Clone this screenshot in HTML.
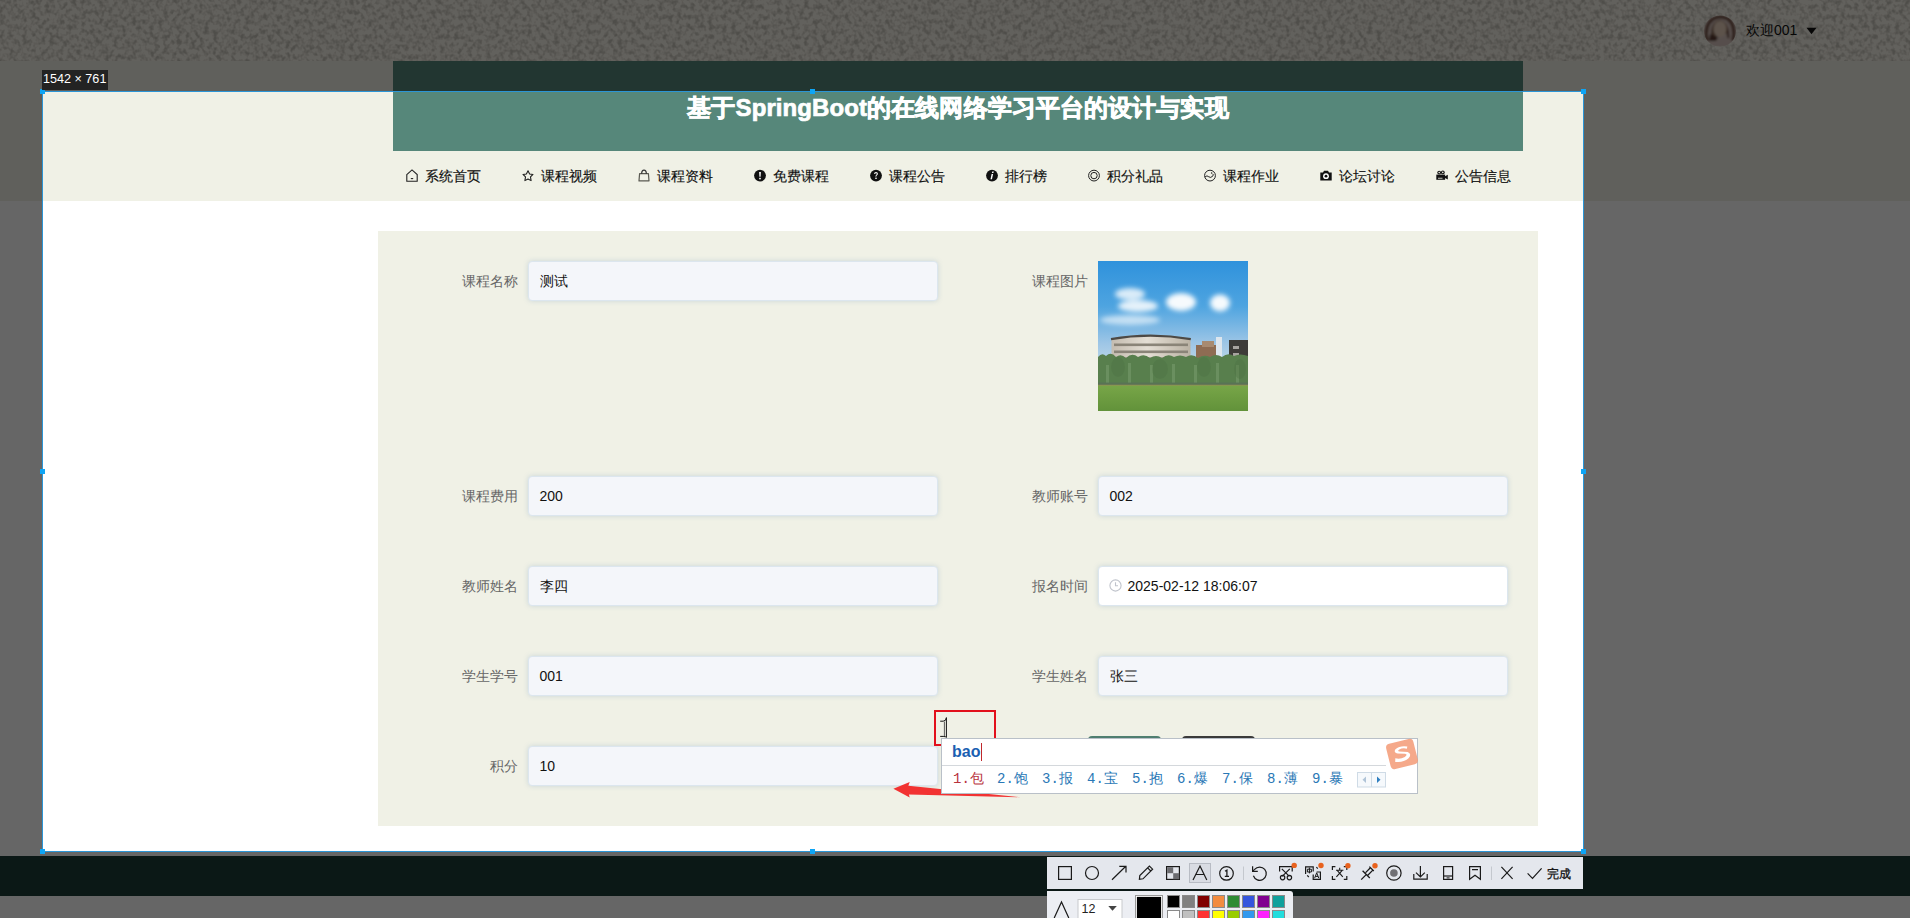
<!DOCTYPE html>
<html><head><meta charset="utf-8">
<style>
*{margin:0;padding:0;box-sizing:border-box}
html,body{width:1910px;height:918px;overflow:hidden;background:#fff}
body{position:relative;font-family:"Liberation Sans",sans-serif;color:#333}
.a{position:absolute}
#topbar{left:0;top:0;width:1910px;height:61px;background:#ede7da}
#hdr{left:0;top:61px;width:1910px;height:140px;background:#f0f1e6}
#green{left:393px;top:61px;width:1130px;height:90px;background:#56877a}
#title{left:393px;top:92px;width:1130px;text-align:center;color:#fff;font-size:24px;font-weight:bold;line-height:32px;white-space:nowrap;letter-spacing:0.1px;-webkit-text-stroke:0.7px #fff}
.nav{top:168px;font-size:14px;line-height:16px;color:#111;white-space:nowrap;-webkit-text-stroke:0.15px #111}
.nav svg{position:absolute;left:0;top:1px}
.nav span{position:absolute;left:19px;top:0}
#page{left:0;top:201px;width:1910px;height:655px;background:#fff}
#form{left:378px;top:231px;width:1160px;height:595px;background:#f0f1e6}
.lbl{font-size:14px;color:#666;line-height:16px;white-space:nowrap;text-align:right;width:100px}
.inp{width:410px;height:40px;background:#f4f6fa;border:1px solid #dce6ee;border-radius:4px;box-shadow:0 0 5px rgba(90,140,180,.25);font-size:14px;color:#111;line-height:38px;padding-left:10.5px;white-space:nowrap}
#footer{left:0;top:856px;width:1910px;height:40px;background:#1c3c37}
.ov{background:rgba(0,0,0,.6)}
.hd{width:5px;height:5px;background:#0ea5f5}
.ime{top:771px;font-size:14px;line-height:16px;color:#2a78b6;white-space:nowrap;font-family:"Liberation Mono",monospace;letter-spacing:0}
#sizelbl{left:42px;top:70px;width:66px;height:20px;background:#232323;color:#fff;font-size:12.6px;line-height:19px;text-align:left;padding-left:1px;white-space:nowrap}
</style></head><body>
<svg class="a" style="left:0;top:0" width="1910" height="61"><defs><filter id="nz" x="0" y="0" width="100%" height="100%"><feTurbulence type="fractalNoise" baseFrequency="0.22 0.2" numOctaves="2" seed="7"/><feColorMatrix type="matrix" values="0 0 0 0 0.1  0 0 0 0 0.1  0 0 0 0 0.08  3 0 0 0 -1.25"/></filter></defs>
<rect width="1910" height="61" fill="#f6f2e8"/><rect width="1910" height="61" filter="url(#nz)" opacity="0.3"/></svg>

<svg class="a" style="left:1703px;top:15px" width="34" height="32" viewBox="0 0 34 32">
<defs><clipPath id="avc"><ellipse cx="17" cy="16" rx="16" ry="15.5"/></clipPath>
<filter id="avb" x="-10%" y="-10%" width="120%" height="120%"><feGaussianBlur stdDeviation="0.9"/></filter></defs>
<g clip-path="url(#avc)"><g filter="url(#avb)">
<rect width="34" height="32" fill="#d8c4be"/>
<path d="M4 26 Q1 10 10 4 Q17 0 25 4 Q33 10 30 26" fill="none" stroke="#765244" stroke-width="3.5"/>
<path d="M8 22 Q7 8 16 5 Q25 6 26 18" fill="#8a6a58"/>
<ellipse cx="17" cy="14" rx="6.5" ry="8" fill="#e8d0bc"/>
<path d="M7 19 L15 22 L13 26 L6 26 Z" fill="#5a3a30"/>
<path d="M24 12 Q27 18 26 24 L24 22 Z" fill="#6a4438"/>
</g></g>
</svg>
<div class="a" style="left:1746px;top:22px;font-size:14px;line-height:16px;color:#111;white-space:nowrap">欢迎001</div>
<svg class="a" style="left:1806px;top:27px" width="11" height="8" viewBox="0 0 11 8"><path d="M0.5 0.8 H10.5 L5.5 7.2 Z" fill="#111"/></svg>
<div class="a" id="hdr"></div>
<div class="a" id="green"></div>
<div class="a" id="title">基于SpringBoot的在线网络学习平台的设计与实现</div>

<div class="a nav" style="left:406px"><svg width="12" height="13" viewBox="0 0 12 13"><path d="M0.8 5.6 L6 0.9 L11.2 5.6 V12.2 H0.8 Z" fill="none" stroke="#222" stroke-width="1.1"/><path d="M4.8 9.6 H7.2" stroke="#222" stroke-width="1.1"/></svg><span>系统首页</span></div>
<div class="a nav" style="left:522px"><svg width="12" height="13" viewBox="0 0 12 13"><path d="M6 1.8 L7.6 4.9 L11 5.4 L8.5 7.9 L9.1 11.6 L6 10 L2.9 11.6 L3.5 7.9 L1 5.4 L4.4 4.9 Z" fill="none" stroke="#1a1a1a" stroke-width="1.05" stroke-linejoin="round"/></svg><span>课程视频</span></div>
<div class="a nav" style="left:638px"><svg width="12" height="13" viewBox="0 0 12 13"><path d="M1.6 4.6 H10.4 L11 11.9 H1 Z" fill="none" stroke="#5a5a52" stroke-width="1.2" stroke-linejoin="round"/><path d="M3.6 4.8 Q3.8 1.2 6 1.2 Q8.2 1.2 8.4 4.8" fill="none" stroke="#333" stroke-width="1.2"/></svg><span>课程资料</span></div>
<div class="a nav" style="left:754px"><svg width="12" height="13" viewBox="0 0 12 13"><circle cx="6" cy="6.6" r="5.9" fill="#111"/><path d="M5.1 3 H6.9 L6.6 7.8 H5.4 Z" fill="#fff"/><rect x="5.2" y="8.8" width="1.6" height="1.5" fill="#fff"/></svg><span>免费课程</span></div>
<div class="a nav" style="left:870px"><svg width="12" height="13" viewBox="0 0 12 13"><circle cx="6" cy="6.6" r="5.9" fill="#111"/><path d="M4.1 5 Q4.1 3 6 3 Q7.9 3 7.9 4.8 Q7.9 5.9 6.8 6.4 Q6.3 6.7 6.3 7.8 H5.5 Q5.4 6.3 6.3 5.7 Q6.8 5.3 6.7 4.8 Q6.6 4.1 6 4.1 Q5.3 4.1 5.3 5 Z" fill="#fff"/><rect x="5.3" y="8.6" width="1.4" height="1.4" fill="#fff"/></svg><span>课程公告</span></div>
<div class="a nav" style="left:986px"><svg width="12" height="13" viewBox="0 0 12 13"><circle cx="6" cy="6.6" r="5.9" fill="#111"/><path d="M6.3 2.6 H7.8 L7.4 4.1 H5.9 Z M5.6 5 H7.1 L6 10.3 H4.5 Z" fill="#fff"/></svg><span>排行榜</span></div>
<div class="a nav" style="left:1088px"><svg width="12" height="13" viewBox="0 0 12 13"><circle cx="6" cy="6.6" r="5.4" fill="none" stroke="#222" stroke-width="1"/><circle cx="6" cy="6.6" r="3.2" fill="none" stroke="#222" stroke-width="1"/></svg><span>积分礼品</span></div>
<div class="a nav" style="left:1204px"><svg width="12" height="13" viewBox="0 0 12 13"><circle cx="6" cy="6.6" r="5.4" fill="none" stroke="#222" stroke-width="1"/><path d="M1 8 Q3 5.8 4.8 7.8 Q6.6 9.6 9 6.8 Q9.8 5.8 8.6 4.8" fill="none" stroke="#222" stroke-width="1"/><circle cx="7.6" cy="4" r="0.7" fill="#222"/></svg><span>课程作业</span></div>
<div class="a nav" style="left:1320px"><svg width="12" height="13" viewBox="0 0 12 13"><path d="M0.3 3.6 H3 L4 1.8 H8 L9 3.6 H11.7 V11.4 H0.3 Z" fill="#111"/><circle cx="6" cy="7.2" r="2.9" fill="#fff"/><circle cx="6" cy="7.2" r="1.4" fill="#111"/></svg><span>论坛讨论</span></div>
<div class="a nav" style="left:1436px"><svg width="12" height="13" viewBox="0 0 12 13"><circle cx="3.2" cy="3.6" r="1.9" fill="#111"/><circle cx="6.8" cy="3.4" r="1.9" fill="#111"/><circle cx="3.2" cy="3.6" r="0.8" fill="#f0f1e6"/><circle cx="6.8" cy="3.4" r="0.8" fill="#f0f1e6"/><rect x="0.3" y="5.6" width="8.8" height="5.2" fill="#111"/><path d="M8.6 7.6 L11.8 5.8 V10.6 L8.6 8.8 Z" fill="#111"/><rect x="2" y="8.8" width="4.5" height="0.8" fill="#f0f1e6"/></svg><span>公告信息</span></div>

<div class="a" id="page"></div>
<div class="a" id="form"></div>

<div class="a lbl" style="left:418px;top:273px">课程名称</div>
<div class="a inp" style="left:528px;top:261px">测试</div>
<div class="a lbl" style="left:988px;top:273px">课程图片</div>

<div class="a lbl" style="left:418px;top:488px">课程费用</div>
<div class="a inp" style="left:528px;top:476px">200</div>
<div class="a lbl" style="left:988px;top:488px">教师账号</div>
<div class="a inp" style="left:1098px;top:476px">002</div>

<div class="a lbl" style="left:418px;top:578px">教师姓名</div>
<div class="a inp" style="left:528px;top:566px">李四</div>
<div class="a lbl" style="left:988px;top:578px">报名时间</div>
<div class="a inp" style="left:1098px;top:566px;background:#fff;padding-left:28.5px">2025-02-12 18:06:07</div>

<div class="a lbl" style="left:418px;top:668px">学生学号</div>
<div class="a inp" style="left:528px;top:656px">001</div>
<div class="a lbl" style="left:988px;top:668px">学生姓名</div>
<div class="a inp" style="left:1098px;top:656px">张三</div>

<div class="a lbl" style="left:418px;top:758px">积分</div>
<div class="a inp" style="left:528px;top:746px">10</div>


<svg class="a" style="left:1098px;top:261px" width="150" height="150" viewBox="0 0 150 150">
<defs>
<linearGradient id="sky" x1="0" y1="0" x2="0" y2="1"><stop offset="0" stop-color="#2f92dc"/><stop offset="0.3" stop-color="#4ea4e0"/><stop offset="0.55" stop-color="#9ec6e6"/><stop offset="0.7" stop-color="#c0d8e8"/></linearGradient>
<linearGradient id="grass" x1="0" y1="0" x2="0" y2="1"><stop offset="0" stop-color="#78a648"/><stop offset="1" stop-color="#62923a"/></linearGradient>
<linearGradient id="bld" x1="0" y1="0" x2="1" y2="0"><stop offset="0" stop-color="#c4bcb0"/><stop offset="0.45" stop-color="#e4ded4"/><stop offset="1" stop-color="#bab2a4"/></linearGradient>
<filter id="bl" x="-30%" y="-60%" width="160%" height="220%"><feGaussianBlur stdDeviation="2.4"/></filter>
<filter id="bl1" x="-5%" y="-5%" width="110%" height="110%"><feGaussianBlur stdDeviation="0.6"/></filter>
</defs>
<rect width="150" height="150" fill="url(#sky)"/>
<g fill="#fff" filter="url(#bl)">
<ellipse cx="32" cy="33" rx="15" ry="6" opacity=".8"/><ellipse cx="40" cy="45" rx="20" ry="6" opacity=".85"/>
<ellipse cx="32" cy="59" rx="30" ry="5" opacity=".6"/>
<ellipse cx="83" cy="41" rx="15" ry="9" opacity=".95"/>
<ellipse cx="122" cy="42" rx="10" ry="8.5" opacity=".95"/>
</g>
<g filter="url(#bl1)">
<rect x="98" y="84" width="26" height="20" fill="#8e6c52"/>
<rect x="104" y="80" width="12" height="6" fill="#a88a70"/>
<rect x="118" y="76" width="6" height="26" fill="#dde6ee"/>
<rect x="131" y="79" width="19" height="25" fill="#3e3a38"/>
<rect x="135" y="85" width="6" height="3" fill="#a8a4a0"/><rect x="135" y="92" width="6" height="3" fill="#a8a4a0"/>
<path d="M13.5 78 Q52 71 92.5 78 L92.5 108 L13.5 108 Z" fill="url(#bld)"/>
<path d="M13 78.2 Q52 71.2 92.8 78.2" stroke="#4e4a44" stroke-width="2.2" fill="none"/>
<g fill="#8a8478"><rect x="16" y="82.5" width="74" height="2.6"/><rect x="16" y="89.5" width="74" height="2.6"/><rect x="16" y="96.5" width="74" height="2.6"/></g>
</g>
<g filter="url(#bl1)">
<path d="M0 96 Q4 91 8 95 Q13 90 18 96 Q23 92 28 97 Q34 91 40 96 Q46 92 52 97 Q58 93 64 97 Q70 92 76 96 Q82 93 88 96 Q94 92 100 97 Q106 93 112 96 Q118 92 124 96 Q130 91 136 95 Q142 92 150 95 L150 124 L0 124 Z" fill="#587f4e"/>
<g fill="#86a878" opacity=".4"><rect x="8" y="104" width="3" height="18"/><rect x="30" y="102" width="3" height="20"/><rect x="52" y="104" width="3" height="18"/><rect x="74" y="103" width="3" height="19"/><rect x="96" y="104" width="3" height="18"/><rect x="118" y="102" width="3" height="20"/><rect x="138" y="104" width="3" height="18"/></g>
<g fill="#4a7040" opacity=".35"><ellipse cx="20" cy="106" rx="7" ry="10"/><ellipse cx="62" cy="108" rx="8" ry="10"/><ellipse cx="106" cy="106" rx="7" ry="10"/><ellipse cx="142" cy="108" rx="6" ry="10"/></g>
</g>
<rect x="0" y="121.5" width="150" height="2.5" fill="#5a7058" opacity=".8"/>
<rect x="0" y="124" width="150" height="26" fill="url(#grass)"/>
<rect x="0" y="123.6" width="150" height="1.2" fill="#9a8a58" opacity=".6"/>
</svg>
<svg class="a" style="left:1109px;top:579px" width="13" height="13" viewBox="0 0 13 13"><circle cx="6.5" cy="6.5" r="5.6" fill="none" stroke="#c0c4cc" stroke-width="1.1"/><path d="M6.5 3.3 V6.8 H9" fill="none" stroke="#c0c4cc" stroke-width="1.1"/></svg>
<div class="a" style="left:1088px;top:736px;width:73px;height:40px;background:#4f7e70;border-radius:4px"></div>
<div class="a" style="left:1182px;top:736px;width:73px;height:40px;background:#3a3a3a;border-radius:4px"></div>
<div class="a" id="footer"></div>

<!-- overlay -->
<div class="a ov" style="left:0;top:0;width:1910px;height:91px"></div>
<div class="a ov" style="left:0;top:852px;width:1910px;height:66px"></div>
<div class="a ov" style="left:0;top:91px;width:42px;height:761px"></div>
<div class="a ov" style="left:1584px;top:91px;width:326px;height:761px"></div>


<!-- selection -->
<div class="a" style="left:42px;top:91px;width:1542px;height:1px;background:#2b95d6"></div>
<div class="a" style="left:42px;top:851px;width:1542px;height:1px;background:#2b95d6"></div>
<div class="a" style="left:42px;top:91px;width:1px;height:761px;background:#2b95d6"></div>
<div class="a" style="left:1583px;top:91px;width:1px;height:761px;background:#2b95d6"></div>
<div class="a hd" style="left:40px;top:89px"></div>
<div class="a hd" style="left:810px;top:89px"></div>
<div class="a hd" style="left:1581px;top:89px"></div>
<div class="a hd" style="left:40px;top:469px"></div>
<div class="a hd" style="left:1581px;top:469px"></div>
<div class="a hd" style="left:40px;top:849px"></div>
<div class="a hd" style="left:810px;top:849px"></div>
<div class="a hd" style="left:1581px;top:849px"></div>
<div class="a" id="sizelbl">1542 × 761</div>

<!-- red rect annotation -->
<div class="a" style="left:934px;top:710px;width:62px;height:36px;border:2px solid #e2101c"></div>
<svg class="a" style="left:939px;top:716px" width="10" height="24" viewBox="0 0 10 24"><path d="M1.2 5.2 H4.2 Q7.2 5 7.4 1.6 V21.4 Q7.2 20.6 4.2 20.4 H1.2" fill="none" stroke="#111" stroke-width="1"/><path d="M5.4 5.6 V20" stroke="#333" stroke-width="0.8"/></svg>
<!-- arrow -->
<svg class="a" style="left:880px;top:770px" width="150" height="40" viewBox="0 0 150 40">
<path d="M13.4 18.8 L29.7 12.1 L28.4 15.8 L140.7 27.2 L28.9 24.4 L29.7 27.6 Z" fill="#f23232"/>
</svg>

<!-- IME -->
<div class="a" style="left:941px;top:738px;width:477px;height:56px;background:#fff;border:1px solid #b9c0c8"></div>
<div class="a" style="left:942px;top:765px;width:444px;height:1px;background:#d4d8dc"></div>
<div class="a" style="left:952px;top:742px;font-size:16px;font-weight:bold;color:#1c5fb2;line-height:20px">bao</div>
<div class="a" style="left:981px;top:743px;width:1px;height:18px;background:#c0282c"></div>
<div class="a ime" style="left:953px;color:#b8323c">1.包</div>
<div class="a ime" style="left:997px">2.饱</div>
<div class="a ime" style="left:1042px">3.报</div>
<div class="a ime" style="left:1087px">4.宝</div>
<div class="a ime" style="left:1132px">5.抱</div>
<div class="a ime" style="left:1177px">6.爆</div>
<div class="a ime" style="left:1222px">7.保</div>
<div class="a ime" style="left:1267px">8.薄</div>
<div class="a ime" style="left:1312px">9.暴</div>
<svg class="a" style="left:1357px;top:772px" width="30" height="16" viewBox="0 0 30 16"><rect x="0.5" y="0.5" width="28" height="14.5" fill="#f6f9fc" stroke="#cfdbe6"/><line x1="14.5" y1="1" x2="14.5" y2="15" stroke="#cfdbe6"/><path d="M9 4.5 L5.5 7.8 L9 11 Z" fill="#b0c4d8"/><path d="M20 4.5 L23.5 7.8 L20 11 Z" fill="#2f7fc0"/></svg>
<svg class="a" style="left:1384px;top:736px" width="36" height="36" viewBox="0 0 36 36"><g transform="rotate(-14 18 18)"><rect x="4" y="5" width="28" height="26" rx="4" fill="#f39a76" opacity=".85"/><path d="M25 12 Q18 9 12.5 12 Q10 14.5 14 16.5 L21 18.5 Q24 19.8 20 21.5 Q15 23 10.5 20.5 L9.5 24 Q17 27 23 24 Q28 21 24 17.5 L16 15 Q13.8 14 16.5 13 Q20 12 24 14 Z" fill="#fff"/></g></svg>

<!-- toolbar -->
<div class="a" style="left:1047px;top:857px;width:536px;height:32px;background:#e4e7ed"></div>
<div class="a" style="left:1047px;top:891px;width:246px;height:27px;background:#eceef3;border-top-right-radius:3px"></div>
<svg class="a" style="left:1047px;top:857px" width="536" height="61" viewBox="1047 857 536 61">
<g fill="none" stroke="#1a1a1a" stroke-width="1.2">
<rect x="1058.6" y="866.6" width="12.8" height="12.8"/>
<circle cx="1092" cy="873" r="6.5"/>
<path d="M1112 879.8 L1125.8 866.2 M1119.3 866.4 H1126 V872.4"/>
<path d="M1139.4 879.2 L1139.8 875.6 L1149.4 866 L1152.6 869.2 L1143 878.8 Z M1147.6 867.8 L1150.8 871"/>
<rect x="1166.6" y="866.6" width="12.8" height="12.8"/>
</g>
<rect x="1167.2" y="867.2" width="6" height="6" fill="#6c6c70"/>
<rect x="1173.2" y="873.2" width="6" height="6" fill="#6c6c70"/>
<rect x="1189.5" y="863.5" width="21" height="19" fill="#d9dce3" stroke="#b8bcc4"/>
<g fill="none" stroke="#1a1a1a" stroke-width="1.2">
<path d="M1193 880 L1200 866 L1206.8 880 M1195.8 874.5 H1204.2"/>
<path d="M1253.4 875.8 A6.6 6.6 0 1 0 1254.6 869.4 L1252.8 871.2"/>
<path d="M1252.6 866.2 V871.4 H1257.8"/>
<circle cx="1226.5" cy="873.4" r="6.8"/>
<path d="M1225 871.2 L1226.9 870.1 V876.6 M1224.8 876.4 H1229" stroke-width="1.3"/>
<path d="M1279.6 871.6 V866.6 H1292.2 V871.6"/>
<path d="M1281.8 868.8 L1289.4 876.4 M1289.8 868.8 L1282.2 876.4"/>
<circle cx="1282.6" cy="877.6" r="2.2"/><circle cx="1289.4" cy="877.6" r="2.2"/>
<path d="M1305.6 874 V866.8 H1313.2 V871.6"/>
<path d="M1307.4 869.2 H1311.4 V872 H1307.4 Z M1309.4 867.6 V873.4" stroke-width="1"/>
<path d="M1313.2 874.6 V879.4 H1320.4 V872 H1316.6"/>
<path d="M1307.2 875.4 L1308.8 877 M1316.4 867.2 L1317.8 868.6"/>
<path d="M1314.6 878.2 L1316.7 872.8 L1318.8 878.2 M1315.4 876.4 H1318" stroke-width="1"/>
<path d="M1332.4 870 V866.6 H1335.4 M1343.8 866.6 H1346.8 V870 M1332.4 876 V879.4 H1335.4 M1343.8 879.4 H1346.8 V876"/>
<path d="M1336 870.2 H1343.4 M1339.7 867.8 V870.2 M1337.4 870.6 L1342.8 876.8 M1342 870.6 L1336.4 876.8" stroke-width="1.1"/>
<path d="M1361.2 879.6 L1366.2 874.6 M1362.6 870.8 L1369.8 878 M1369.4 866.6 L1373.8 871 M1365.6 872.6 L1370.4 867.8 M1367.8 875.2 L1372.6 870.4" stroke-width="1.3"/>
<circle cx="1393.9" cy="873" r="7.2"/>
<path d="M1413.8 874 V879.2 H1427.2 V874 M1420.4 866 V877 M1416 872.6 L1420.4 877 L1424.8 872.6"/>
<rect x="1443.6" y="866.6" width="9" height="12.8"/>
<path d="M1443.6 876 H1452.6"/>
<path d="M1469.6 866.6 H1480.4 V879.2 L1475 875.2 L1469.6 879.2 Z M1472 869.6 H1478"/>
<path d="M1501.4 866.8 L1512.6 878.8 M1512.6 866.8 L1501.4 878.8"/>
<path d="M1527.6 873.4 L1532.5 878.4 L1541.6 868.3"/>
</g>
<circle cx="1393.9" cy="873" r="3.8" fill="#707074"/>
<rect x="1446.6" y="877.4" width="3" height="1" fill="#1a1a1a"/>
<line x1="1243.5" y1="866.5" x2="1243.5" y2="880" stroke="#c4c8ce" stroke-width="1"/>
<line x1="1491.5" y1="866.5" x2="1491.5" y2="880" stroke="#c4c8ce" stroke-width="1"/>
<g fill="#e8621e"><circle cx="1294.2" cy="865.4" r="2.7"/><circle cx="1321" cy="865.5" r="2.7"/><circle cx="1347.9" cy="865.7" r="2.7"/><circle cx="1375" cy="865.7" r="2.7"/></g>
<text x="1547" y="877.6" font-size="12" font-family="Liberation Sans" fill="#111" stroke="#111" stroke-width="0.3">完成</text>
<!-- sub panel -->
<path d="M1054.2 918 L1061.5 902 L1068.8 918" fill="none" stroke="#1a1a1a" stroke-width="1.2"/>
<rect x="1078" y="899.5" width="44" height="20" fill="#fff" stroke="#c8cacd"/>
<text x="1081.5" y="913" font-size="12.5" font-family="Liberation Sans" fill="#222">12</text>
<path d="M1108.3 906 H1116.8 L1112.5 910.8 Z" fill="#444"/>
<rect x="1135.5" y="895.5" width="27" height="24" fill="#fff" stroke="#999"/>
<rect x="1136.9" y="896.9" width="24.2" height="22" fill="#000"/>
<g stroke="#8a8a8a" stroke-width="1">
<rect x="1167.5" y="895.5" width="12" height="12" fill="#000"/>
<rect x="1182.5" y="895.5" width="12" height="12" fill="#808080"/>
<rect x="1197.5" y="895.5" width="12" height="12" fill="#800000"/>
<rect x="1212.5" y="895.5" width="12" height="12" fill="#f28c40"/>
<rect x="1227.5" y="895.5" width="12" height="12" fill="#2e8b34"/>
<rect x="1242.5" y="895.5" width="12" height="12" fill="#3355dd"/>
<rect x="1257.5" y="895.5" width="12" height="12" fill="#800090"/>
<rect x="1272.5" y="895.5" width="12" height="12" fill="#10a09c"/>
<rect x="1167.5" y="910.5" width="12" height="12" fill="#fff"/>
<rect x="1182.5" y="910.5" width="12" height="12" fill="#c0c0c0"/>
<rect x="1197.5" y="910.5" width="12" height="12" fill="#ff3333"/>
<rect x="1212.5" y="910.5" width="12" height="12" fill="#ffff00"/>
<rect x="1227.5" y="910.5" width="12" height="12" fill="#99cc00"/>
<rect x="1242.5" y="910.5" width="12" height="12" fill="#3399ee"/>
<rect x="1257.5" y="910.5" width="12" height="12" fill="#ff22ff"/>
<rect x="1272.5" y="910.5" width="12" height="12" fill="#22dddd"/>
</g>
</svg>
</body></html>
